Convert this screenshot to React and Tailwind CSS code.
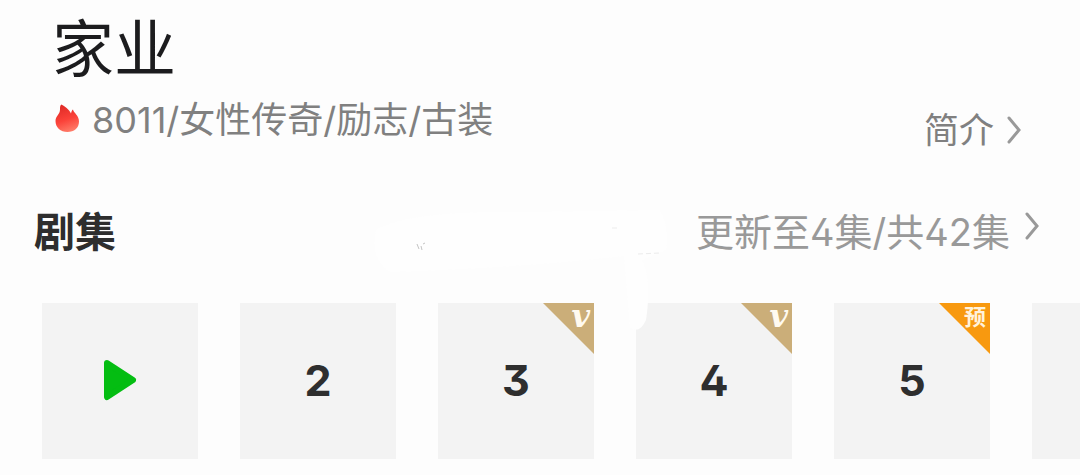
function Chevron({ className }) {
  return (
    <svg viewBox="0 0 16 28" className={className} fill="none" stroke="currentColor" strokeWidth="3" strokeLinecap="round" aria-hidden="true">
      <path d="M3 2 13 14 3 26" />
    </svg>
  );
}

function Flame() {
  return (
    <svg viewBox="0 0 28 34" className="h-[34px] w-[28px]" aria-hidden="true">
      <defs>
        <linearGradient id="flame" x1="0.3" y1="0" x2="0.6" y2="1">
          <stop offset="0" stopColor="#df2a26" />
          <stop offset="0.55" stopColor="#fb4239" />
          <stop offset="1" stopColor="#ff7d6a" />
        </linearGradient>
      </defs>
      <path d="M9.500 1.500C12.500 3.500 17 6 19 10.500 19.500 8.500 20 7 21 6.500 21.500 10 27 12 27 18.500 27 25 22 29 15.500 29 8.500 29 3.500 24.500 3.500 18 3.500 13 8 11.500 8 6.500 8 4 8 2.500 9.500 1.500Z" fill="url(#flame)" />
    </svg>
  );
}

/* White brush strokes lying over the gap between the section title and the tiles. */
function Smear() {
  return (
    <svg viewBox="0 0 320 150" className="pointer-events-none absolute left-[370px] top-[190px] h-[150px] w-[320px]" aria-hidden="true">
      <path d="M6 40Q40 20 160 22L290 20Q300 40 296 60L272 70Q282 90 276 130Q270 144 260 138L254 66Q150 78 20 82Q0 70 6 40Z" fill="#fefefe" />
      <path d="M47 54l2 5M51 56l1 4M53 54l2-1" stroke="#c4c4c4" strokeWidth="1" />
      <path d="M242 38h7M268 64l22-1" stroke="#ececec" strokeWidth="1" strokeDasharray="5 3" />
    </svg>
  );
}

const episodes = [
  { n: 1, playing: true },
  { n: 2 },
  { n: 3, badge: "v" },
  { n: 4, badge: "v" },
  { n: 5, badge: "预" },
  { n: 6, peek: true },
];

function Badge({ kind }) {
  const preview = kind === "预";
  return (
    <span className="absolute right-0 top-0 block size-[51px]">
      <svg viewBox="0 0 51 51" className="block size-full" aria-hidden="true">
        <path d="M0 0H51V51Z" fill={preview ? "#f8990f" : "#cbae79"} />
      </svg>
      {preview ? (
        <span className="absolute right-1 top-0 text-[22px] font-bold leading-[28px] text-[#fff3dc]">预</span>
      ) : (
        <span className="absolute right-1 top-0 font-['DejaVu_Serif',serif] text-[32px] font-bold italic leading-[26px] text-[#fffaf0]">v</span>
      )}
    </span>
  );
}

function PlayIcon() {
  return (
    <svg viewBox="0 0 34 42" className="h-[42px] w-[34px]" role="img" aria-label="1">
      <path d="M4 4 30 21 4 38Z" fill="#04bd12" stroke="#04bd12" strokeWidth="6" strokeLinejoin="round" />
    </svg>
  );
}

export default function App() {
  return (
    <main className="relative overflow-hidden bg-[#fdfdfd] pb-4 font-['Inter','Noto_Sans_CJK_SC',sans-serif] [font-feature-settings:'cv02','cv09']">
      <header className="flex items-end justify-between pl-[52px] pr-[58px] pt-3">
        <div className="pb-2">
          <h1 className="text-[62px] leading-[76px] text-[#1c1c1e]">家业</h1>
          <p className="mt-2 flex items-center gap-3 text-[36px] leading-[48px] text-[#808080]">
            <Flame />
            8011/女性传奇/励志/古装
          </p>
        </div>
        <a href="#intro" className="flex items-center gap-3 text-[35px] leading-[44px] text-[#808080]">
          简介
          <Chevron className="h-7 w-4 text-[#999]" />
        </a>
      </header>
      <section>
        <div className="mt-14 flex items-center justify-between pl-[34px] pr-10">
          <h2 className="text-[41px] font-bold leading-[48px] text-[#2e2e2e]">剧集</h2>
          <a href="#all" className="flex items-start gap-[14px] text-[38px] leading-[40px] text-[#999]">
            更新至4集/共42集
            <Chevron className="h-7 w-4" />
          </a>
        </div>
        <div className="mt-[47px] flex gap-[42px] pl-[42px]">
          {episodes.map((e) => (
            <button
              key={e.n}
              type="button"
              aria-label={String(e.n)}
              className="relative flex size-[156px] shrink-0 items-center justify-center bg-[#f3f3f3] pb-0.5 text-[43px] font-bold text-[#2e2e2e]"
            >
              {e.playing ? <PlayIcon /> : e.peek ? null : e.n}
              {e.badge && <Badge kind={e.badge} />}
            </button>
          ))}
        </div>
      </section>
      <Smear />
    </main>
  );
}
